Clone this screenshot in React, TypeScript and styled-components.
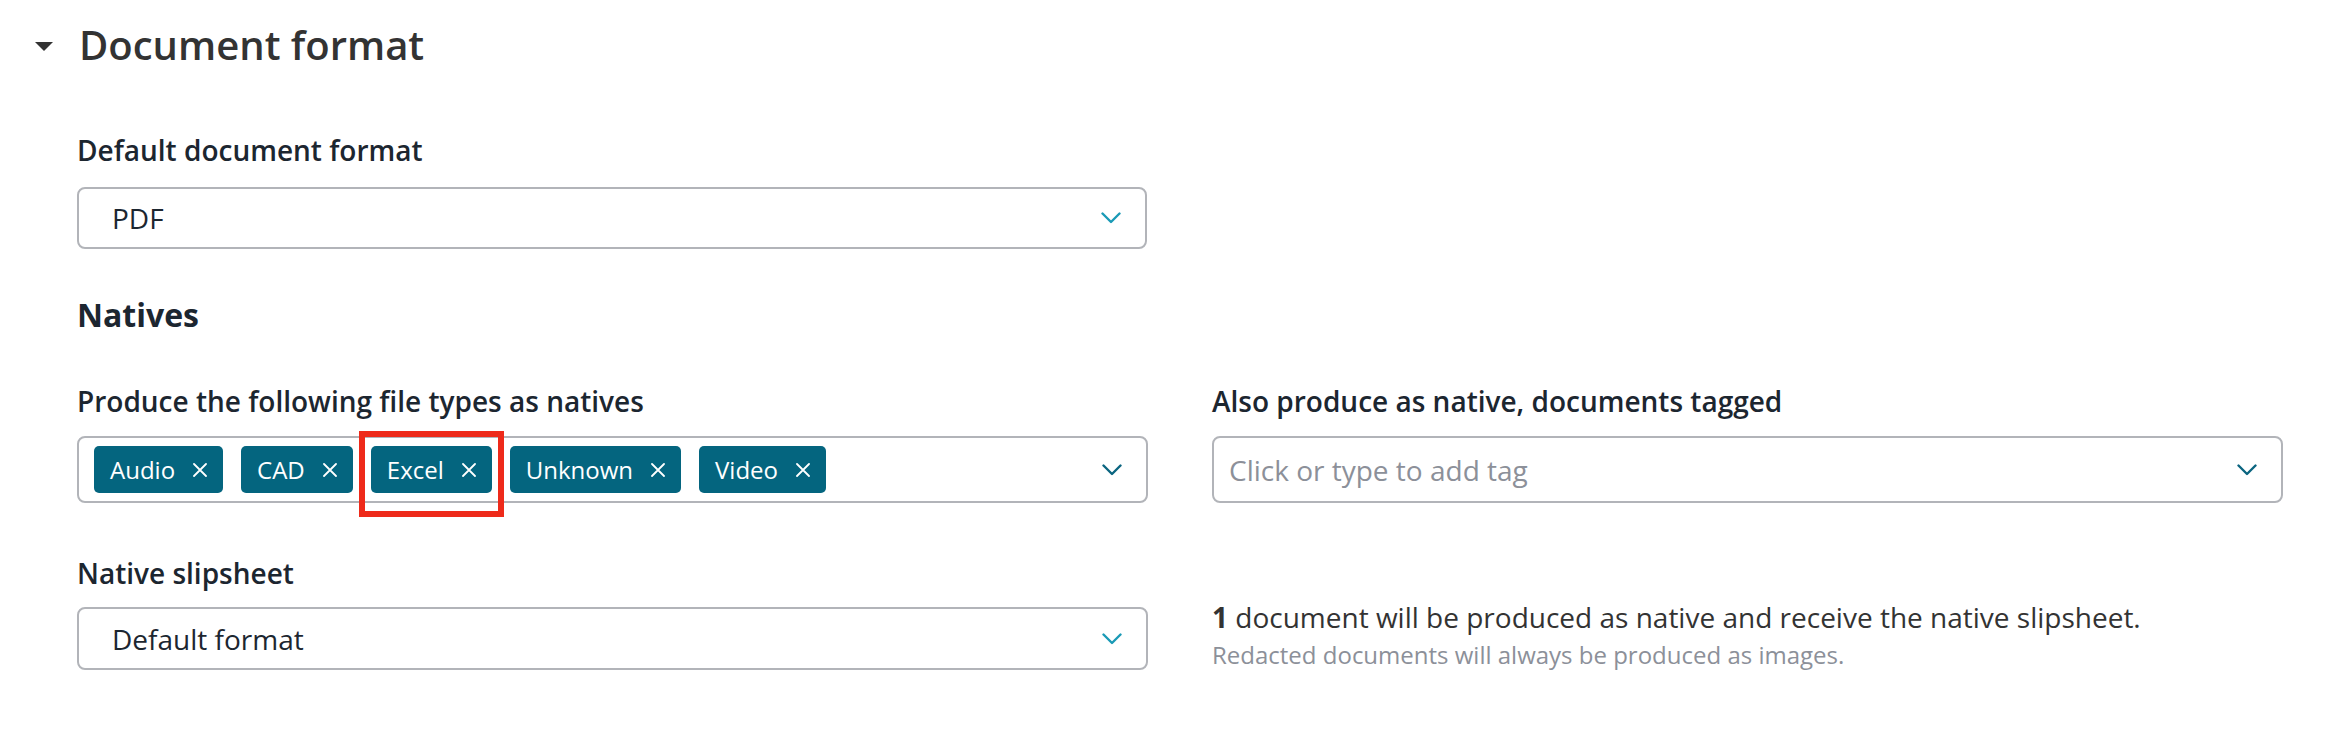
import React from 'react'
import styled, { createGlobalStyle } from 'styled-components'

const GlobalStyle = createGlobalStyle`
  html, body {
    margin: 0;
    padding: 0;
    background: #ffffff;
  }
  body {
    font-family: 'Open Sans', 'Liberation Sans', sans-serif;
    color: #1c2630;
  }
`

const ChevronDown: React.FC<{ color: string }> = ({ color }) => (
  <svg width="20" height="12" viewBox="0 0 20 12" fill="none">
    <path d="M1.5 1.5 L10 10 L18.5 1.5" stroke={color} strokeWidth="2.4" strokeLinecap="round" strokeLinejoin="round" />
  </svg>
)

const CloseIcon = () => (
  <svg width="14" height="14" viewBox="0 0 14 14" fill="none">
    <path d="M1 1 L13 13 M13 1 L1 13" stroke="#ffffff" strokeWidth="1.8" strokeLinecap="round" />
  </svg>
)

const fileTypes = ['Audio', 'CAD', 'Excel', 'Unknown', 'Video']

const App: React.FC = () => {
  return (
    <>
      <GlobalStyle />
      <Page>
        <SectionHeader>
          <Caret />
          <SectionTitle>Document format</SectionTitle>
        </SectionHeader>

        <SectionBody>
          <Field $width={1070}>
            <Label>Default document format</Label>
            <SelectBox>
              <SelectValue>PDF</SelectValue>
              <ChevronDown color="#1a9ab6" />
            </SelectBox>
          </Field>

          <SubHeading>Natives</SubHeading>

          <TwoCols>
            <Field>
              <Label>Produce the following file types as natives</Label>
              <TagBox>
                <TagList>
                  {fileTypes.map((t) => (
                    <Tag key={t} $highlighted={t === 'Excel'}>
                      <span>{t}</span>
                      <CloseIcon />
                    </Tag>
                  ))}
                </TagList>
                <ChevronDown color="#0b6580" />
              </TagBox>
            </Field>
            <Field>
              <Label>Also produce as native, documents tagged</Label>
              <TagBox>
                <Placeholder>Click or type to add tag</Placeholder>
                <ChevronDown color="#0b6580" />
              </TagBox>
            </Field>
          </TwoCols>

          <TwoCols $spaced>
            <Field>
              <Label>Native slipsheet</Label>
              <SelectBox $compact>
                <SelectValue>Default format</SelectValue>
                <ChevronDown color="#1a9ab6" />
              </SelectBox>
            </Field>
            <InfoBlock>
              <InfoText>
                <strong>1</strong> document will be produced as native and receive the native slipsheet.
              </InfoText>
              <InfoNote>Redacted documents will always be produced as images.</InfoNote>
            </InfoBlock>
          </TwoCols>
        </SectionBody>
      </Page>
    </>
  )
}

export default App

const Page = styled.div`
  width: 2344px;
  height: 730px;
  box-sizing: border-box;
  padding-top: 18px;
  background: #ffffff;
  overflow: hidden;
`

const SectionHeader = styled.div`
  display: flex;
  align-items: center;
  gap: 26px;
  padding-left: 35px;
  height: 54px;
`

const Caret = styled.span`
  width: 0;
  height: 0;
  border-left: 9px solid transparent;
  border-right: 9px solid transparent;
  border-top: 9px solid #333333;
  margin-top: 2px;
`

const SectionTitle = styled.h2`
  margin: 0;
  font-size: 40px;
  line-height: 54px;
  font-weight: 600;
  color: #333333;
`

const SectionBody = styled.div`
  padding-left: 77px;
  margin-top: 59px;
  display: flex;
  flex-direction: column;
`

const Field = styled.div<{ $width?: number }>`
  display: flex;
  flex-direction: column;
  gap: 18px;
  width: ${(p) => (p.$width ? `${p.$width}px` : 'auto')};
`

const Label = styled.label`
  font-size: 28px;
  line-height: 38px;
  font-weight: 600;
  color: #1c2630;
`

const SelectBox = styled.div<{ $compact?: boolean }>`
  box-sizing: border-box;
  height: ${(p) => (p.$compact ? 63 : 62)}px;
  display: flex;
  align-items: center;
  justify-content: space-between;
  padding: 0 24px 0 33px;
  border: 2px solid #b2b4b9;
  border-radius: 8px;
  background: #ffffff;
`

const SelectValue = styled.span`
  font-size: 28px;
  color: #1c2630;
`

const SubHeading = styled.h3`
  margin: 44px 0 0;
  font-size: 32px;
  line-height: 44px;
  font-weight: 700;
  color: #1c2630;
`

const TwoCols = styled.div<{ $spaced?: boolean }>`
  display: grid;
  grid-template-columns: 1071px 1071px;
  column-gap: 64px;
  align-items: end;
  margin-top: ${(p) => (p.$spaced ? 51 : 45)}px;

  & ${Field} {
    gap: ${(p) => (p.$spaced ? 15 : 16)}px;
  }
`

const TagBox = styled.div`
  box-sizing: border-box;
  height: 67px;
  display: flex;
  align-items: center;
  justify-content: space-between;
  padding: 0 24px 0 15px;
  border: 2px solid #b2b4b9;
  border-radius: 8px;
  background: #ffffff;
`

const TagList = styled.div`
  display: flex;
  align-items: center;
  gap: 18px;
`

const Tag = styled.div<{ $highlighted?: boolean }>`
  position: relative;
  box-sizing: border-box;
  height: 47px;
  display: flex;
  align-items: center;
  gap: 18px;
  padding: 0 16px 0 16px;
  border-radius: 5px;
  background: #04657f;
  color: #ffffff;
  font-size: 24px;

  ${(p) =>
    p.$highlighted
      ? `
    &::after {
      content: '';
      position: absolute;
      top: -15px;
      bottom: -24px;
      left: -12px;
      right: -12px;
      border: 6px solid #ee2a1a;
      pointer-events: none;
    }
  `
      : ''}
`

const Placeholder = styled.span`
  font-size: 28px;
  color: #8c9099;
`

const InfoBlock = styled.div`
  display: flex;
  flex-direction: column;
  margin-bottom: -4px;
`

const InfoText = styled.p`
  margin: 0;
  font-size: 28px;
  line-height: 38px;
  color: #333333;

  strong {
    font-weight: 700;
  }
`

const InfoNote = styled.p`
  margin: 0;
  font-size: 24px;
  line-height: 38px;
  color: #8c9099;
`
